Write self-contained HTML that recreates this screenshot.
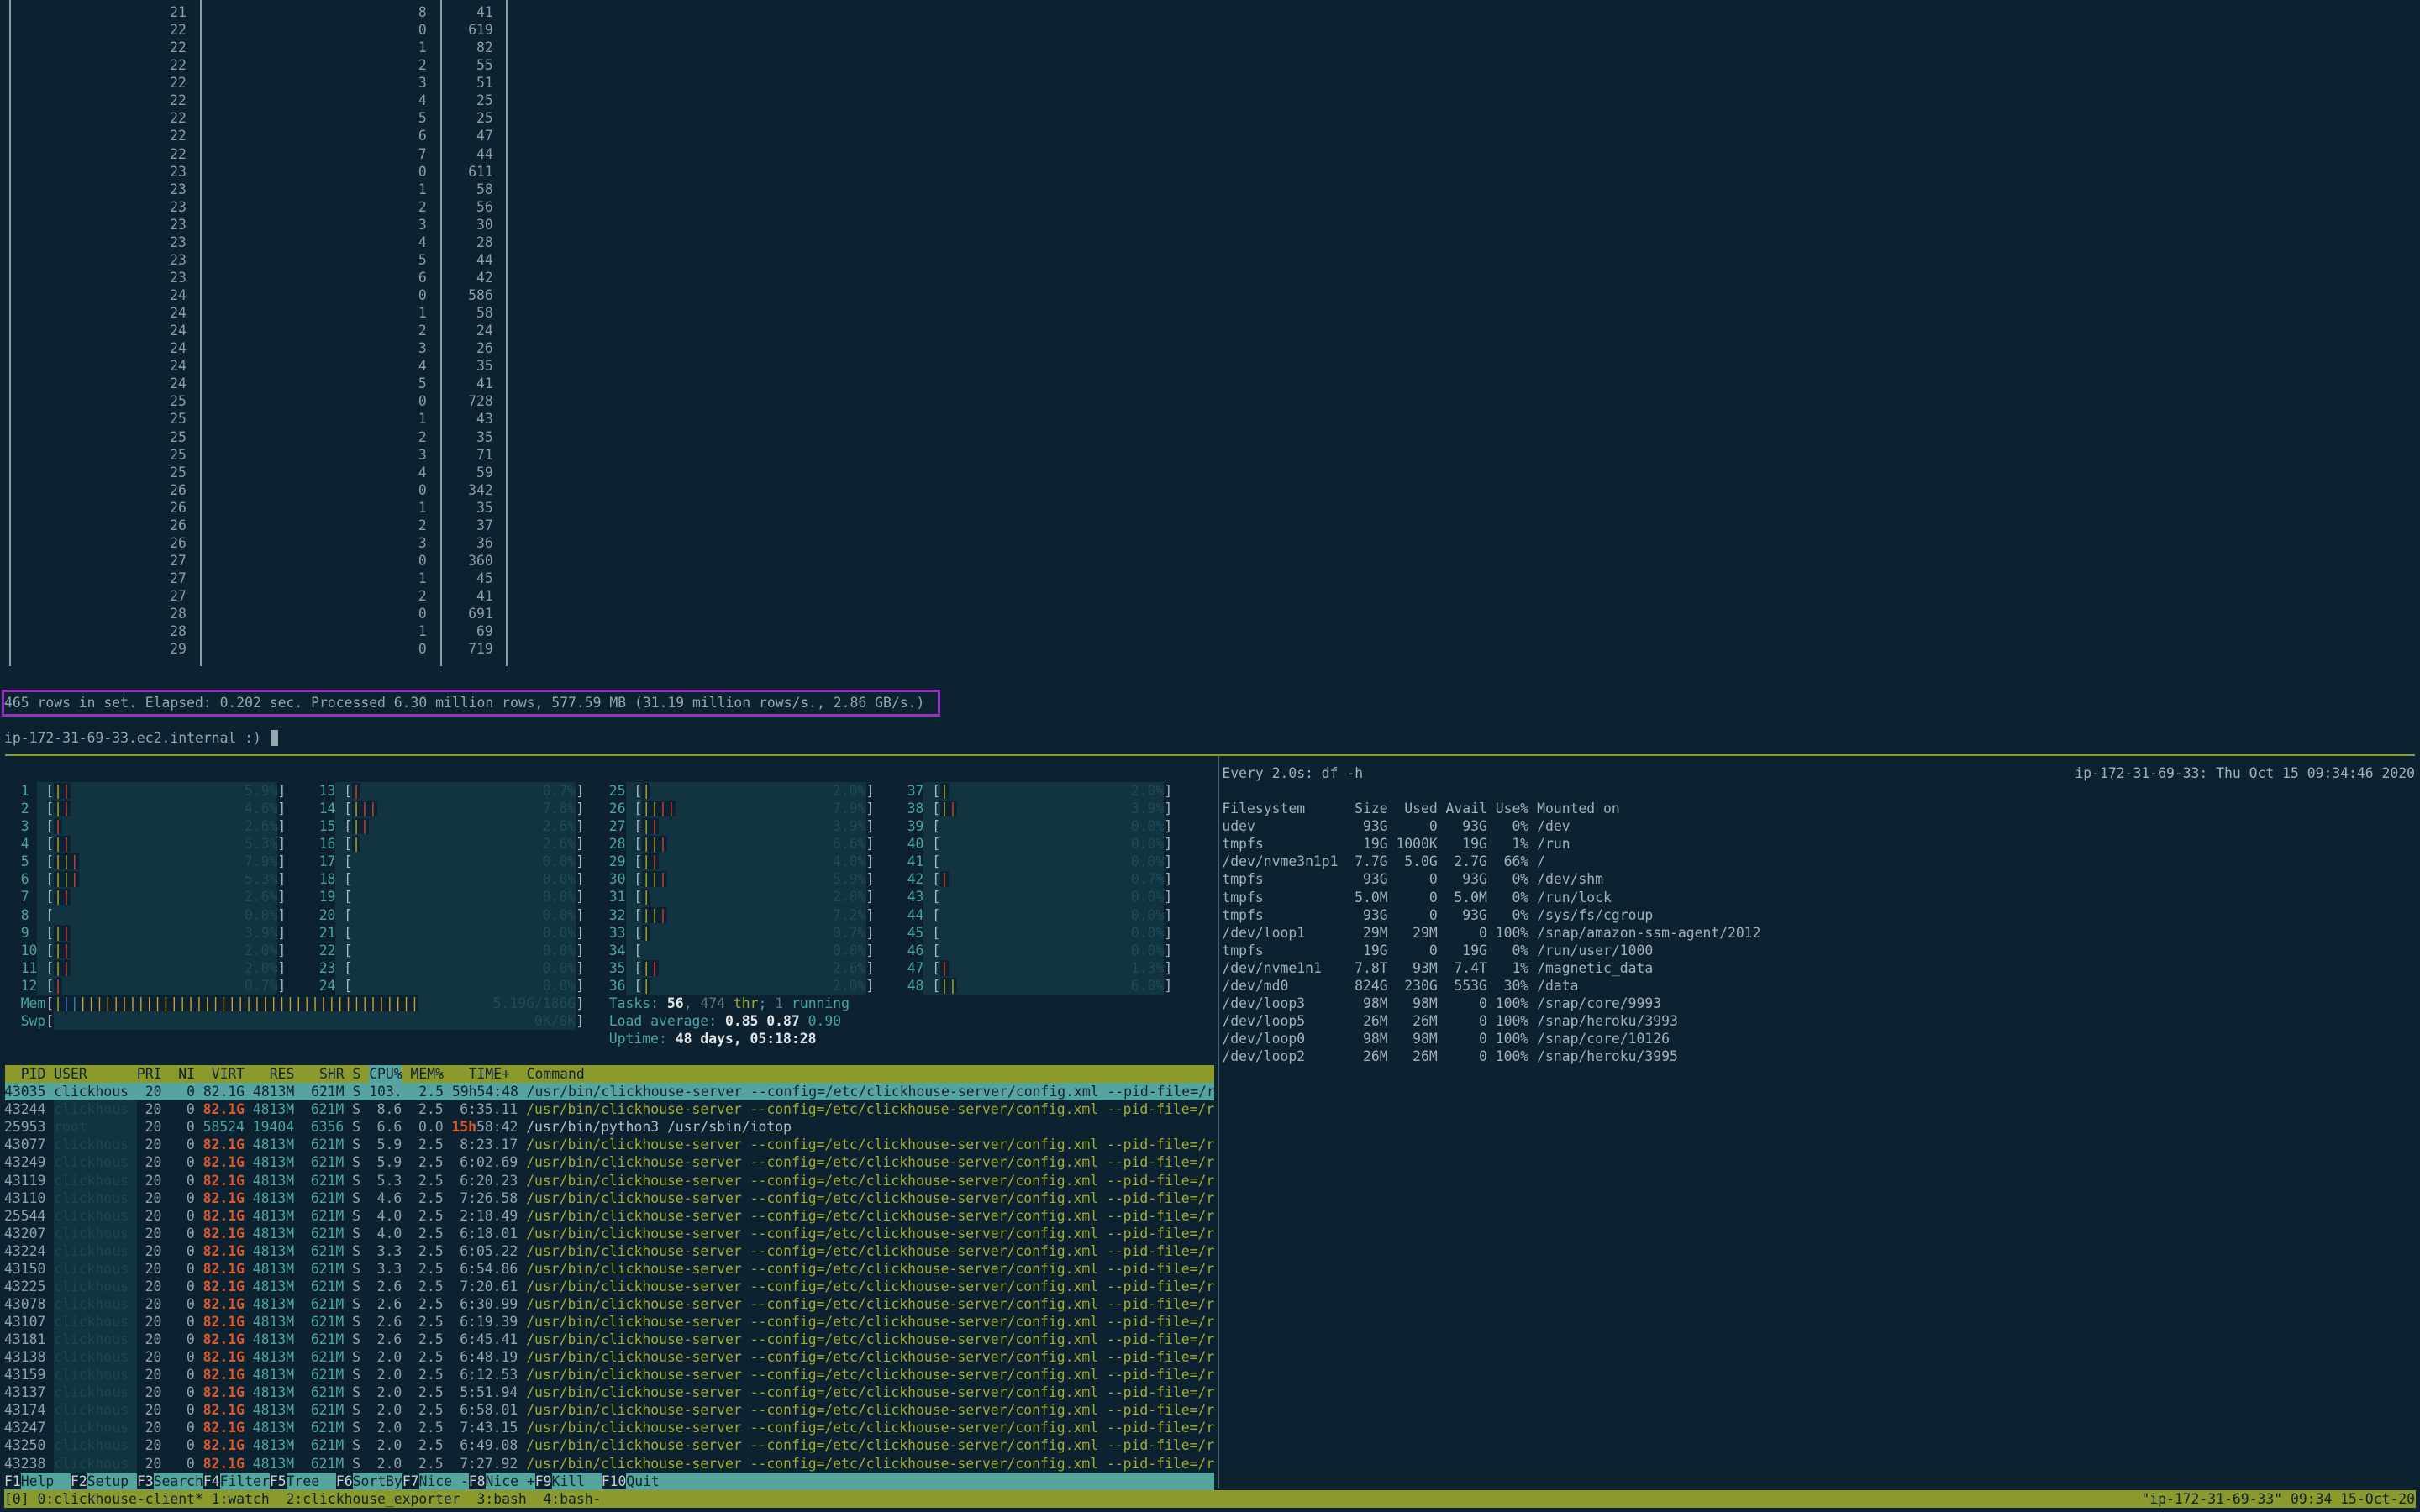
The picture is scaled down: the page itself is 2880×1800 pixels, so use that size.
<!DOCTYPE html>
<html><head><meta charset="utf-8">
<style>
*{margin:0;padding:0;box-sizing:border-box}
html,body{width:2880px;height:1800px;overflow:hidden;background:#0d2230}
body{position:relative;font-family:"DejaVu Sans Mono","Liberation Mono",monospace;font-size:16.4px;line-height:21.07px;color:#93a3ab}
pre,.a{position:absolute;font:inherit;line-height:21.07px;white-space:pre;margin:0}
.r{text-align:right}
.vl{position:absolute;width:2px;background:#8a9ca5}
.t{color:#4aa5a5}
.w{color:#e2e8ea;font-weight:bold}
.dim{color:#1f4c58}
.g{color:#a9b02c;background:#0d2230}
.rd{color:#d3402f;background:#0d2230}
.bl{color:#3f7fd0;background:#0d2230}
.au{color:#c9a227;background:#0d2230}
.mbg{position:absolute;background:#123440;height:21.07px}
.or{color:#e0582a;font-weight:bold}
.ol{color:#a3ad2f}
.k{background:#0d2230;color:#c8d2d6}
</style></head><body>

<!-- top table -->
<div class="vl" style="left:11px;top:0;height:793px"></div>
<div class="vl" style="left:238px;top:0;height:793px"></div>
<div class="vl" style="left:524px;top:0;height:793px"></div>
<div class="vl" style="left:602px;top:0;height:793px"></div>
<pre class="r" style="left:5px;top:4px;width:216.9px;color:#8d9ea6">21
22
22
22
22
22
22
22
22
23
23
23
23
23
23
23
24
24
24
24
24
24
25
25
25
25
25
26
26
26
26
27
27
27
28
28
29</pre>
<pre class="r" style="left:241.6px;top:4px;width:266.2px;color:#8d9ea6">8
0
1
2
3
4
5
6
7
0
1
2
3
4
5
6
0
1
2
3
4
5
0
1
2
3
4
0
1
2
3
0
1
2
0
1
0</pre>
<pre class="r" style="left:527.6px;top:4px;width:59.2px;color:#8d9ea6">41
619
82
55
51
25
25
47
44
611
58
56
30
28
44
42
586
58
24
26
35
41
728
43
35
71
59
342
35
37
36
360
45
41
691
69
719</pre>

<!-- elapsed -->
<div style="position:absolute;left:2px;top:821px;width:1117px;height:32px;border:3px solid #9a2fc0"></div>
<pre style="left:5px;top:825.7px;color:#97a7ae">465 rows in set. Elapsed: 0.202 sec. Processed 6.30 million rows, 577.59 MB (31.19 million rows/s., 2.86 GB/s.)</pre>
<pre style="left:5px;top:867.9px;color:#97a7ae">ip-172-31-69-33.ec2.internal :)</pre>
<div style="position:absolute;left:322px;top:869px;width:9px;height:19px;background:#97a7ae"></div>

<!-- separators -->
<div style="position:absolute;left:6px;top:898px;width:2868px;height:2px;background:#8a9a2c"></div>
<div style="position:absolute;left:1449px;top:900px;width:2px;height:872px;background:#4d6570"></div>

<!-- CPU meters -->
<div class="mbg" style="left:44.4px;top:931.1px;width:286px;height:252.8px"></div>
<div class="mbg" style="left:399.4px;top:931.1px;width:286px;height:252.8px"></div>
<div class="mbg" style="left:744.5px;top:931.1px;width:286px;height:252.8px"></div>
<div class="mbg" style="left:1099.4px;top:931.1px;width:286px;height:252.8px"></div>

<pre class="t" style="left:24.7px;top:931.1px">1
2
3
4
5
6
7
8
9
10
11
12</pre>
<pre class="t" style="left:379.7px;top:931.1px">13
14
15
16
17
18
19
20
21
22
23
24</pre>
<pre class="t" style="left:724.8px;top:931.1px">25
26
27
28
29
30
31
32
33
34
35
36</pre>
<pre class="t" style="left:1079.7px;top:931.1px">37
38
39
40
41
42
43
44
45
46
47
48</pre>

<pre style="left:54.3px;top:931.1px;color:#a8b6bc">[<span class="g">|</span><span class="rd">|</span>
[<span class="g">|</span><span class="rd">|</span>
[<span class="rd">|</span>
[<span class="g">|</span><span class="rd">|</span>
[<span class="g">||</span><span class="rd">|</span>
[<span class="g">||</span><span class="rd">|</span>
[<span class="g">|</span><span class="rd">|</span>
[
[<span class="g">|</span><span class="rd">|</span>
[<span class="g">|</span><span class="rd">|</span>
[<span class="g">|</span><span class="rd">|</span>
[<span class="rd">|</span></pre>
<pre style="left:409.3px;top:931.1px;color:#a8b6bc">[<span class="rd">|</span>
[<span class="g">|</span><span class="rd">||</span>
[<span class="g">|</span><span class="rd">|</span>
[<span class="g">|</span>
[
[
[
[
[
[
[
[</pre>
<pre style="left:754.4px;top:931.1px;color:#a8b6bc">[<span class="g">|</span>
[<span class="g">||</span><span class="rd">||</span>
[<span class="g">|</span><span class="rd">|</span>
[<span class="g">||</span><span class="rd">|</span>
[<span class="g">|</span><span class="rd">|</span>
[<span class="g">||</span><span class="rd">|</span>
[<span class="g">|</span>
[<span class="g">||</span><span class="rd">|</span>
[<span class="g">|</span>
[
[<span class="g">|</span><span class="rd">|</span>
[<span class="g">|</span></pre>
<pre style="left:1109.3px;top:931.1px;color:#a8b6bc">[<span class="g">|</span>
[<span class="g">|</span><span class="rd">|</span>
[
[
[
[<span class="rd">|</span>
[
[
[
[
[<span class="rd">|</span>
[<span class="g">||</span></pre>

<pre class="r dim" style="left:281.1px;top:931.1px;width:49.3px">5.9%
4.6%
2.6%
5.3%
7.9%
5.3%
2.6%
0.0%
3.9%
2.0%
2.0%
0.7%</pre>
<pre class="r dim" style="left:636px;top:931.1px;width:49.3px">0.7%
7.8%
2.6%
2.6%
0.0%
0.0%
0.0%
0.0%
0.0%
0.0%
0.0%
0.0%</pre>
<pre class="r dim" style="left:981.1px;top:931.1px;width:49.3px">2.0%
7.9%
3.9%
6.6%
4.0%
5.9%
2.0%
7.2%
0.7%
0.0%
2.6%
2.0%</pre>
<pre class="r dim" style="left:1336.1px;top:931.1px;width:49.3px">2.0%
3.9%
0.0%
0.0%
0.0%
0.7%
0.0%
0.0%
0.0%
0.0%
1.3%
6.0%</pre>
<pre style="left:330.4px;top:931.1px;color:#a8b6bc">]
]
]
]
]
]
]
]
]
]
]
]</pre>
<pre style="left:685.3px;top:931.1px;color:#a8b6bc">]
]
]
]
]
]
]
]
]
]
]
]
]
]</pre>
<pre style="left:1030.4px;top:931.1px;color:#a8b6bc">]
]
]
]
]
]
]
]
]
]
]
]</pre>
<pre style="left:1385.4px;top:931.1px;color:#a8b6bc">]
]
]
]
]
]
]
]
]
]
]
]</pre>

<!-- Mem / Swp -->
<div class="mbg" style="left:64.2px;top:1183.9px;width:621.1px;height:42.1px"></div>
<pre style="left:24.7px;top:1183.9px"><span class="t">Mem</span><span style="color:#a8b6bc">[</span><span class="g">|</span><span class="bl">||</span><span class="au">|||||||||||||||||||||||||||||||||||||||||</span>
<span class="t">Swp</span><span style="color:#a8b6bc">[</span></pre>
<pre class="r dim" style="left:300.8px;top:1183.9px;width:384.5px">5.19G/186G
0K/0K</pre>

<pre style="left:724.8px;top:1183.9px"><span class="t">Tasks: </span><span class="w">56</span><span class="t">, </span><span style="color:#5d767f">474</span> <span class="ol">thr</span><span class="t">; </span><span style="color:#5d767f">1</span><span class="t"> running</span>
<span class="t">Load average: </span><span class="w">0.85 0.87 </span><span class="t">0.90</span>
<span class="t">Uptime: </span><span class="w">48 days, 05:18:28</span></pre>

<!-- htop header -->
<div style="position:absolute;left:6px;top:1268.2px;width:1438.6px;height:21.07px;background:#8c9a2c"></div>
<div style="position:absolute;left:438.8px;top:1268.2px;width:39.4px;height:21.07px;background:#56a4a0"></div>
<pre style="left:5px;top:1268.2px;color:#0d2230">  PID USER      PRI  NI  VIRT   RES   SHR S CPU% MEM%   TIME+  Command</pre>
<div style="position:absolute;left:6px;top:1289.3px;width:1438.6px;height:21.07px;background:#56a4a0"></div>
<pre style="left:5px;top:1289.3px;color:#0d2230">43035 clickhous  20   0 82.1G 4813M  621M S 103.  2.5 59h54:48 /usr/bin/clickhouse-server --config=/etc/clickhouse-server/config.xml --pid-file=/r</pre>

<!-- process columns -->
<div style="position:absolute;left:64.2px;top:1310.3px;width:98.6px;height:442.5px;background:#123340"></div>
<pre class="r" style="left:5px;top:1310.3px;width:49.3px">43244
25953
43077
43249
43119
43110
25544
43207
43224
43150
43225
43078
43107
43181
43138
43159
43137
43174
43247
43250
43238</pre>
<pre style="left:64.2px;top:1310.3px;color:#1c4656">clickhous
root
clickhous
clickhous
clickhous
clickhous
clickhous
clickhous
clickhous
clickhous
clickhous
clickhous
clickhous
clickhous
clickhous
clickhous
clickhous
clickhous
clickhous
clickhous
clickhous</pre>
<pre style="left:172.6px;top:1310.3px">20
20
20
20
20
20
20
20
20
20
20
20
20
20
20
20
20
20
20
20
20</pre>
<pre style="left:221.9px;top:1310.3px">0
0
0
0
0
0
0
0
0
0
0
0
0
0
0
0
0
0
0
0
0</pre>
<pre class="r" style="left:241.6px;top:1310.3px;width:49.3px"><span class="or">82.1G</span>
<span class="t">58524</span>
<span class="or">82.1G</span>
<span class="or">82.1G</span>
<span class="or">82.1G</span>
<span class="or">82.1G</span>
<span class="or">82.1G</span>
<span class="or">82.1G</span>
<span class="or">82.1G</span>
<span class="or">82.1G</span>
<span class="or">82.1G</span>
<span class="or">82.1G</span>
<span class="or">82.1G</span>
<span class="or">82.1G</span>
<span class="or">82.1G</span>
<span class="or">82.1G</span>
<span class="or">82.1G</span>
<span class="or">82.1G</span>
<span class="or">82.1G</span>
<span class="or">82.1G</span>
<span class="or">82.1G</span></pre>
<pre class="r t" style="left:300.8px;top:1310.3px;width:49.3px">4813M
19404
4813M
4813M
4813M
4813M
4813M
4813M
4813M
4813M
4813M
4813M
4813M
4813M
4813M
4813M
4813M
4813M
4813M
4813M
4813M</pre>
<pre class="r t" style="left:360px;top:1310.3px;width:49.3px">621M
6356
621M
621M
621M
621M
621M
621M
621M
621M
621M
621M
621M
621M
621M
621M
621M
621M
621M
621M
621M</pre>
<pre style="left:419.1px;top:1310.3px">S
S
S
S
S
S
S
S
S
S
S
S
S
S
S
S
S
S
S
S
S</pre>
<pre class="r" style="left:438.8px;top:1310.3px;width:39.4px">8.6
6.6
5.9
5.9
5.3
4.6
4.0
4.0
3.3
3.3
2.6
2.6
2.6
2.6
2.0
2.0
2.0
2.0
2.0
2.0
2.0</pre>
<pre style="left:498px;top:1310.3px">2.5
0.0
2.5
2.5
2.5
2.5
2.5
2.5
2.5
2.5
2.5
2.5
2.5
2.5
2.5
2.5
2.5
2.5
2.5
2.5
2.5</pre>
<pre class="r" style="left:537.4px;top:1310.3px;width:78.9px">6:35.11
<span class="or">15h</span>58:42
8:23.17
6:02.69
6:20.23
7:26.58
2:18.49
6:18.01
6:05.22
6:54.86
7:20.61
6:30.99
6:19.39
6:45.41
6:48.19
6:12.53
5:51.94
6:58.01
7:43.15
6:49.08
7:27.92</pre>
<pre class="ol" style="left:626.2px;top:1310.3px">/usr/bin/clickhouse-server --config=/etc/clickhouse-server/config.xml --pid-file=/r
<span style="color:#b4c0c5">/usr/bin/python3 /usr/sbin/iotop</span>
/usr/bin/clickhouse-server --config=/etc/clickhouse-server/config.xml --pid-file=/r
/usr/bin/clickhouse-server --config=/etc/clickhouse-server/config.xml --pid-file=/r
/usr/bin/clickhouse-server --config=/etc/clickhouse-server/config.xml --pid-file=/r
/usr/bin/clickhouse-server --config=/etc/clickhouse-server/config.xml --pid-file=/r
/usr/bin/clickhouse-server --config=/etc/clickhouse-server/config.xml --pid-file=/r
/usr/bin/clickhouse-server --config=/etc/clickhouse-server/config.xml --pid-file=/r
/usr/bin/clickhouse-server --config=/etc/clickhouse-server/config.xml --pid-file=/r
/usr/bin/clickhouse-server --config=/etc/clickhouse-server/config.xml --pid-file=/r
/usr/bin/clickhouse-server --config=/etc/clickhouse-server/config.xml --pid-file=/r
/usr/bin/clickhouse-server --config=/etc/clickhouse-server/config.xml --pid-file=/r
/usr/bin/clickhouse-server --config=/etc/clickhouse-server/config.xml --pid-file=/r
/usr/bin/clickhouse-server --config=/etc/clickhouse-server/config.xml --pid-file=/r
/usr/bin/clickhouse-server --config=/etc/clickhouse-server/config.xml --pid-file=/r
/usr/bin/clickhouse-server --config=/etc/clickhouse-server/config.xml --pid-file=/r
/usr/bin/clickhouse-server --config=/etc/clickhouse-server/config.xml --pid-file=/r
/usr/bin/clickhouse-server --config=/etc/clickhouse-server/config.xml --pid-file=/r
/usr/bin/clickhouse-server --config=/etc/clickhouse-server/config.xml --pid-file=/r
/usr/bin/clickhouse-server --config=/etc/clickhouse-server/config.xml --pid-file=/r
/usr/bin/clickhouse-server --config=/etc/clickhouse-server/config.xml --pid-file=/r</pre>

<!-- F keys -->
<div style="position:absolute;left:5px;top:1752.8px;width:1439.6px;height:21.07px;background:#56a4a0"></div>
<pre style="left:5px;top:1752.8px;color:#0d2230"><span class="k">F1</span>Help  <span class="k">F2</span>Setup <span class="k">F3</span>Search<span class="k">F4</span>Filter<span class="k">F5</span>Tree  <span class="k">F6</span>SortBy<span class="k">F7</span>Nice -<span class="k">F8</span>Nice +<span class="k">F9</span>Kill  <span class="k">F10</span>Quit</pre>

<!-- tmux status -->
<div style="position:absolute;left:5px;top:1773.9px;width:2870px;height:21.07px;background:#8c9a2c"></div>
<pre style="left:5px;top:1773.9px;color:#0d2230">[0] 0:clickhouse-client* 1:watch  2:clickhouse_exporter  3:bash  4:bash-</pre>
<pre class="r" style="left:2000px;top:1773.9px;width:874px;color:#0d2230">"ip-172-31-69-33" 09:34 15-Oct-20</pre>

<!-- right pane: df -->
<pre style="left:1454.4px;top:910px;color:#a3b1b7">Every 2.0s: df -h</pre>
<pre class="r" style="left:2000px;top:910px;width:874px;color:#a3b1b7">ip-172-31-69-33: Thu Oct 15 09:34:46 2020</pre>
<pre style="left:1454.4px;top:952.2px;color:#a3b1b7">Filesystem
udev
tmpfs
/dev/nvme3n1p1
tmpfs
tmpfs
tmpfs
/dev/loop1
tmpfs
/dev/nvme1n1
/dev/md0
/dev/loop3
/dev/loop5
/dev/loop0
/dev/loop2</pre>
<pre class="r" style="left:1454.4px;top:952.2px;width:197.2px;color:#a3b1b7">Size
93G
19G
7.7G
93G
5.0M
93G
29M
19G
7.8T
824G
98M
26M
98M
26M</pre>
<pre class="r" style="left:1454.4px;top:952.2px;width:256.4px;color:#a3b1b7">Used
0
1000K
5.0G
0
0
0
29M
0
93M
230G
98M
26M
98M
26M</pre>
<pre class="r" style="left:1454.4px;top:952.2px;width:315.5px;color:#a3b1b7">Avail
93G
19G
2.7G
93G
5.0M
93G
0
19G
7.4T
553G
0
0
0
0</pre>
<pre class="r" style="left:1454.4px;top:952.2px;width:364.8px;color:#a3b1b7">Use%
0%
1%
66%
0%
0%
0%
100%
0%
1%
30%
100%
100%
100%
100%</pre>
<pre style="left:1829.1px;top:952.2px;color:#a3b1b7">Mounted on
/dev
/run
/
/dev/shm
/run/lock
/sys/fs/cgroup
/snap/amazon-ssm-agent/2012
/run/user/1000
/magnetic_data
/data
/snap/core/9993
/snap/heroku/3993
/snap/core/10126
/snap/heroku/3995</pre>

</body></html>
